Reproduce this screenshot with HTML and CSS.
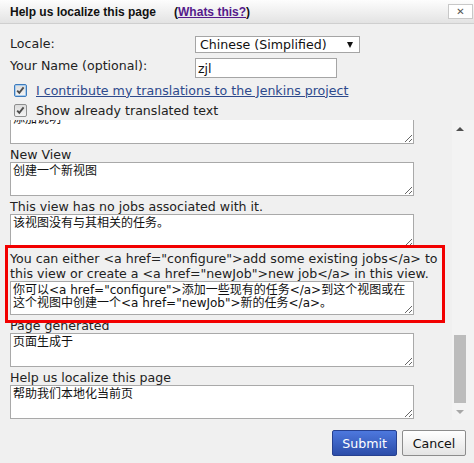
FILE: index.html
```html
<!DOCTYPE html>
<html>
<head>
<meta charset="utf-8">
<link rel="stylesheet" href="styles.css">
</head>
<body>
<div class="dialog">
  <div class="header">
    <span class="title">Help us localize this page</span>
    <span class="whats">(<a href="#">Whats this?</a>)</span>
    <span class="close">✕</span>
  </div>
  <div class="form">
    <div class="grid">
      <span class="flabel">Locale:</span>
      <div class="select"><span>Chinese (Simplified)</span><span class="caret"></span></div>
      <span class="flabel">Your Name (optional):</span>
      <input class="name" type="text" value="zjl">
    </div>
    <div class="check first-check"><span class="box focus"><svg width="11" height="11" viewBox="0 0 11 11"><path d="M2.2 5.6 L4.3 7.8 L8.6 2.4" fill="none" stroke="#4d4d4d" stroke-width="1.9"/></svg></span><a href="#" class="contrib">I contribute my translations to the Jenkins project</a></div>
    <div class="check"><span class="box"><svg width="11" height="11" viewBox="0 0 11 11"><path d="M2.2 5.6 L4.3 7.8 L8.6 2.4" fill="none" stroke="#4d4d4d" stroke-width="1.9"/></svg></span><span>Show already translated text</span></div>
  </div>
  <div class="scroll">
    <div class="entries">
      <textarea class="ta first" wrap="off">添加说明</textarea>
      <div class="lbl">New View</div>
      <textarea class="ta" wrap="off">创建一个新视图</textarea>
      <div class="lbl">This view has no jobs associated with it.</div>
      <textarea class="ta" wrap="off">该视图没有与其相关的任务。</textarea>
      <div class="marked">
        <div class="lbl">You can either &lt;a href="configure"&gt;add some existing jobs&lt;/a&gt; to<br>this view or create a &lt;a href="newJob"&gt;new job&lt;/a&gt; in this view.</div>
        <textarea class="ta" wrap="off">你可以&lt;a href="configure"&gt;添加一些现有的任务&lt;/a&gt;到这个视图或在
这个视图中创建一个&lt;a href="newJob"&gt;新的任务&lt;/a&gt;。</textarea>
      </div>
      <div class="lbl">Page generated</div>
      <textarea class="ta" wrap="off">页面生成于</textarea>
      <div class="lbl">Help us localize this page</div>
      <textarea class="ta" wrap="off">帮助我们本地化当前页</textarea>
    </div>
    <div class="scrollbar">
      <div class="sb-btn"><span class="arrow-up"></span></div>
      <div class="sb-track"><div class="sb-thumb"></div></div>
      <div class="sb-btn"><span class="arrow-down"></span></div>
    </div>
  </div>
  <div class="buttons">
    <button class="btn submit">Submit</button>
    <button class="btn cancel">Cancel</button>
  </div>
</div>
</body>
</html>
```

FILE: styles.css
```css
html, body {
  margin: 0;
  padding: 0;
  background: #f0f0f0;
}
.dialog {
  width: 474px;
  height: 463px;
  font-family: "DejaVu Sans", "Noto Sans CJK SC", sans-serif;
  font-size: 12.6px;
  color: #222;
  overflow: hidden;
}
.header {
  height: 23px;
  border-bottom: 1px solid #cfcfcf;
  background: linear-gradient(#fdfdfd, #e3e3e3);
  display: flex;
  align-items: center;
  padding-left: 10px;
  font-family: "Liberation Sans", Arial, sans-serif;
  font-size: 12px;
  font-weight: bold;
  color: #111;
}
.whats {
  margin-left: 18px;
}
.whats a {
  color: #551a8b;
  text-decoration: underline;
}
.close {
  margin-left: auto;
  margin-right: 1px;
  width: 23px;
  height: 13px;
  background: #fff;
  border: 1px solid #c8c8c8;
  color: #555;
  font-family: "DejaVu Sans", sans-serif;
  font-size: 10px;
  font-weight: bold;
  line-height: 13px;
  text-align: center;
  align-self: flex-start;
  margin-top: 4px;
}
.form {
  padding-top: 12px;
}
.grid {
  display: grid;
  grid-template-columns: 185px auto;
  row-gap: 5px;
  padding-left: 10px;
  align-items: start;
}
.flabel {
  line-height: 15px;
}
.select {
  width: 165px;
  height: 17px;
  box-sizing: border-box;
  border: 1px solid #a5a5a5;
  background: #fff;
  display: flex;
  align-items: center;
  padding-left: 4px;
  font-size: 12.6px;
  color: #111;
}
.caret {
  margin-left: auto;
  margin-right: 6px;
  width: 0;
  height: 0;
  border-left: 3.5px solid transparent;
  border-right: 3.5px solid transparent;
  border-top: 6px solid #111;
}
.name {
  width: 142px;
  height: 20px;
  box-sizing: border-box;
  border: 1px solid #a5a5a5;
  margin: 0;
  padding: 0 2px;
  font-family: "DejaVu Sans", sans-serif;
  font-size: 12.6px;
  color: #111;
  background: #fff;
  outline: none;
}
.check {
  height: 20px;
  display: flex;
  align-items: center;
  padding-left: 14px;
  gap: 9px;
}
.first-check {
  margin-top: 2px;
}
.box {
  width: 13px;
  height: 13px;
  box-sizing: border-box;
  border: 1px solid #8e8f8f;
  border-radius: 2px;
  background: linear-gradient(#dcdcdc, #f4f4f4);
  display: flex;
  align-items: center;
  justify-content: center;
}
.box svg {
  display: block;
}
.box.focus {
  border-color: #3d7bbd;
  box-shadow: inset 0 0 0 1px #a9cdee;
}
.contrib {
  color: #2e4a8c;
  text-decoration: underline;
}
.scroll {
  height: 300px;
  display: flex;
}
.entries {
  flex: 1;
  overflow: hidden;
  padding-left: 10px;
  position: relative;
}
.ta {
  display: block;
  width: 404px;
  height: 34px;
  box-sizing: border-box;
  margin: 0;
  border: 1px solid #a9a9a9;
  padding: 2px 2px;
  background: #fff;
  font-family: "DejaVu Sans", "Noto Sans CJK SC", sans-serif;
  font-size: 12px;
  line-height: 13px;
  color: #111;
  overflow: hidden;
  white-space: pre;
}
.ta.first {
  margin-top: -10px;
}
.lbl {
  padding-top: 3px;
  line-height: 15px;
}
.marked {
  position: relative;
}
.marked::after {
  content: "";
  position: absolute;
  left: -5px;
  top: -3px;
  width: 440px;
  bottom: -8px;
  border: 3px solid #f20000;
  box-sizing: border-box;
}
.scrollbar {
  width: 22px;
  background: #f3f3f3;
  display: flex;
  flex-direction: column;
}
.sb-btn {
  width: 16px;
  height: 17px;
  display: flex;
  align-items: center;
  justify-content: center;
}
.arrow-up {
  width: 0;
  height: 0;
  border-left: 4px solid transparent;
  border-right: 4px solid transparent;
  border-bottom: 4px solid #505050;
}
.arrow-down {
  width: 0;
  height: 0;
  border-left: 4px solid transparent;
  border-right: 4px solid transparent;
  border-top: 4px solid #a8a8a8;
}
.sb-track {
  flex: 1;
  display: flex;
  flex-direction: column;
  justify-content: flex-end;
}
.sb-thumb {
  width: 12px;
  margin-left: 2px;
  height: 68px;
  background: #bcbcbc;
}
.buttons {
  display: flex;
  justify-content: flex-end;
  gap: 5px;
  padding-right: 8px;
  margin-top: 10px;
}
.btn {
  width: 64px;
  height: 26px;
  box-sizing: border-box;
  margin: 0;
  font-family: "DejaVu Sans", sans-serif;
  font-size: 12.6px;
  border-radius: 2px;
  padding: 0;
}
.submit {
  width: 65px;
  background: linear-gradient(#4d78de, #2c4da9);
  border: 1px solid #26408f;
  color: #fff;
}
.cancel {
  background: linear-gradient(#ffffff, #e4e4e4);
  border: 1px solid #8c8c8c;
  color: #111;
}
```
